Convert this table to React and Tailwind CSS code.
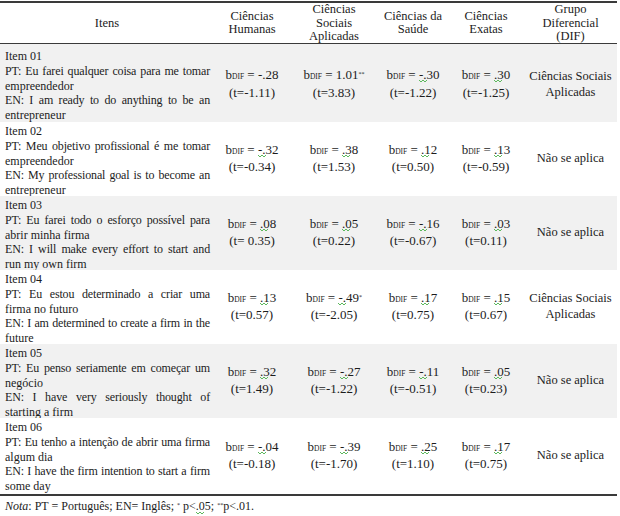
import React from 'react';

const cols = 'grid grid-cols-[214px_76px_88px_70px_76px_93px]';

const rows = [
  {
    item: 'Item 01',
    lines: [
      ['PT: Eu farei qualquer coisa para me tomar', true],
      ['empreendedor', false],
      ['EN: I am ready to do anything to be an', true],
      ['entrepreneur', false],
    ],
    vals: [
      ['-.28', '', '(t=-1.11)', false],
      ['1.01', '**', '(t=3.83)', false],
      ['-.30', '', '(t=-1.22)', true],
      ['.30', '', '(t=-1.25)', true],
    ],
    dif: ['Ciências Sociais', 'Aplicadas'],
    bg: 'bg-[#f1f1f1]',
    size: 'h-[78px] pt-[5px]',
  },
  {
    item: 'Item 02',
    lines: [
      ['PT: Meu objetivo profissional é me tomar', true],
      ['empreendedor', false],
      ['EN: My professional goal is to become an', true],
      ['entrepreneur', false],
    ],
    vals: [
      ['-.32', '', '(t=-0.34)', true],
      ['.38', '', '(t=1.53)', true],
      ['.12', '', '(t=0.50)', true],
      ['.13', '', '(t=-0.59)', true],
    ],
    dif: ['Não se aplica'],
    bg: 'bg-white',
    size: 'h-[74px] pt-[2px]',
  },
  {
    item: 'Item 03',
    lines: [
      ['PT: Eu farei todo o esforço possível para', true],
      ['abrir minha firma', false],
      ['EN: I will make every effort to start and', true],
      ['run my own firm', false],
    ],
    vals: [
      ['.08', '', '(t= 0.35)', true],
      ['.05', '', '(t=0.22)', true],
      ['-.16', '', '(t=-0.67)', true],
      ['.03', '', '(t=0.11)', true],
    ],
    dif: ['Não se aplica'],
    bg: 'bg-[#f1f1f1]',
    size: 'h-[74px] pt-[2px]',
  },
  {
    item: 'Item 04',
    lines: [
      ['PT: Eu estou determinado a criar uma', true],
      ['firma no futuro', false],
      ['EN: I am determined to create a firm in the', true],
      ['future', false],
    ],
    vals: [
      ['.13', '', '(t=0.57)', true],
      ['-.49', '*', '(t=-2.05)', true],
      ['.17', '', '(t=0.75)', true],
      ['.15', '', '(t=0.67)', true],
    ],
    dif: ['Ciências Sociais', 'Aplicadas'],
    bg: 'bg-white',
    size: 'h-[74px] pt-[2px]',
  },
  {
    item: 'Item 05',
    lines: [
      ['PT: Eu penso seriamente em começar um', true],
      ['negócio', false],
      ['EN: I have very seriously thought of', true],
      ['starting a firm', false],
    ],
    vals: [
      ['.32', '', '(t=1.49)', true],
      ['-.27', '', '(t=-1.22)', true],
      ['-.11', '', '(t=-0.51)', true],
      ['.05', '', '(t=0.23)', true],
    ],
    dif: ['Não se aplica'],
    bg: 'bg-[#f1f1f1]',
    size: 'h-[74px] pt-[2px]',
  },
  {
    item: 'Item 06',
    lines: [
      ['PT: Eu tenho a intenção de abrir uma firma', true],
      ['algum dia', false],
      ['EN: I have the firm intention to start a firm', true],
      ['some day', false],
    ],
    vals: [
      ['-.04', '', '(t=-0.18)', true],
      ['-.39', '', '(t=-1.70)', true],
      ['.25', '', '(t=1.10)', true],
      ['.17', '', '(t=0.75)', true],
    ],
    dif: ['Não se aplica'],
    bg: 'bg-white',
    size: 'h-[76px] pt-[2px]',
  },
];

// little green spell-check wave under a character
const Squig = ({ children }) => (
  <span className="relative inline-block">
    {children}
    <svg className="absolute left-0 top-[12px]" width="8" height="4" viewBox="0 0 8 4">
      <path d="M0 1 L2 3 L4 1 L6 3 L8 1" fill="none" stroke="#5cb85c" strokeWidth="1" />
    </svg>
  </span>
);

const Value = ({ v }) => {
  const [num, star, t, sq] = v;
  const neg = num.startsWith('-');
  const body = neg ? num.slice(2) : num.slice(1);
  const head = neg ? '-.' : '.';
  return (
    <div className="flex flex-col items-center justify-center leading-[15.5px] text-[13px] pb-[4px]">
      <div className="whitespace-nowrap">
        b<span className="text-[7.5px]">DIF</span> ={' '}
        {sq ? (
          <>
            <Squig>{head}</Squig>
            {body}
          </>
        ) : (
          num
        )}
        {star && <sup className="text-[6px]">{star}</sup>}
      </div>
      <div className="whitespace-nowrap">{t}</div>
    </div>
  );
};

export default function App() {
  return (
    <div className="w-[620px] h-[516px] bg-white text-[#1c1c1c] text-[12px] font-['Liberation_Serif','Times_New_Roman',serif]">
      <div className="w-[617px] pt-[1px]">
        <div className="border-t-2 border-[#3a3a3a]" />
        <div className={`${cols} h-[41px] border-b border-[#3a3a3a] leading-[13.5px] text-[12.5px] text-center items-center`}>
          <div>Itens</div>
          <div>Ciências<br />Humanas</div>
          <div>Ciências<br />Sociais<br />Aplicadas</div>
          <div>Ciências da<br />Saúde</div>
          <div>Ciências<br />Exatas</div>
          <div>Grupo<br />Diferencial<br />(DIF)</div>
        </div>
        {rows.map((r) => (
          <div key={r.item} className={`${cols} ${r.bg} ${r.size}`}>
            <div className="pl-[5px] pr-[4px] leading-[14.8px] overflow-hidden">
              <div>{r.item}</div>
              {r.lines.map(([txt, just]) => (
                <div
                  key={txt}
                  className={
                    just
                      ? 'whitespace-nowrap text-justify [text-align-last:justify] tracking-[-0.15px]'
                      : 'whitespace-nowrap'
                  }
                >
                  {txt}
                </div>
              ))}
            </div>
            {r.vals.map((v, i) => (
              <Value key={i} v={v} />
            ))}
            <div className="flex flex-col items-center justify-center leading-[16px] text-[12.5px] pb-[4px]">
              {r.dif.map((d) => (
                <div key={d}>{d}</div>
              ))}
            </div>
          </div>
        ))}
        <div className="border-t-2 border-[#3a3a3a]" />
        <div className="pl-[5px] pt-[3px] leading-[14px]">
          <i>Nota</i>: PT = Português; EN= Inglês; <sup className="text-[6px]">*</sup> p&lt;<Squig>.</Squig>05;{' '}
          <sup className="text-[6px]">**</sup>p&lt;.01.
        </div>
      </div>
    </div>
  );
}
